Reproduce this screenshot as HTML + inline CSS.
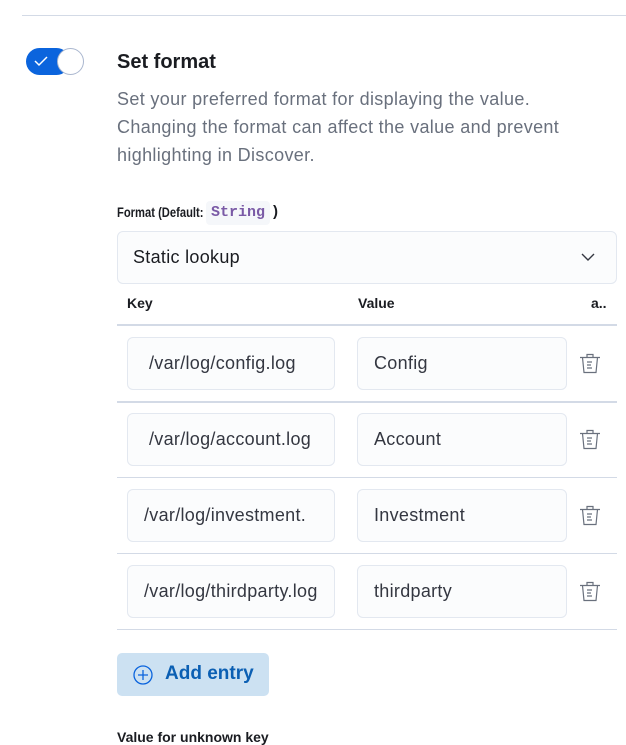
<!DOCTYPE html>
<html><head><style>
body{margin:0;width:626px;height:744px;overflow:hidden;background:#fff;font-family:"Liberation Sans",sans-serif;position:relative;color:#1a1c21}
.a{position:absolute}
.inp{position:absolute;background:#fbfcfd;border:1px solid #e3e8f0;border-radius:6px;box-sizing:border-box;height:53px;font-size:18px;line-height:51px;color:#343741;overflow:hidden;white-space:nowrap;letter-spacing:0.3px}
.inp span{display:inline-block;overflow:hidden;vertical-align:top}
.line{position:absolute;left:117px;width:500px;height:1px;background:#d3dae6}
</style></head><body>
<div class="a" style="left:22px;top:15px;width:604px;height:1px;background:#d3dae6"></div>
<div class="a" style="left:26px;top:48px;width:44px;height:27px;border-radius:14px;background:#0b64dd"></div>
<div class="a" style="left:57px;top:48px;width:27px;height:27px;border-radius:50%;background:#fff;border:1px solid #aab7cf;box-sizing:border-box"></div>
<svg class="a" style="left:33px;top:54px" width="16" height="14"><path d="M2 7l4 4 8-8" stroke="#fff" stroke-width="1.5" fill="none"/></svg>
<div class="a" style="left:117px;top:51px;font-size:20px;font-weight:bold">Set format</div>
<div class="a" style="left:117px;top:85px;width:520px;font-size:18px;line-height:28px;color:#69707d;white-space:nowrap;letter-spacing:0.35px">Set your preferred format for displaying the value.<br>Changing the format can affect the value and prevent<br>highlighting in Discover.</div>
<div class="a" style="left:117px;top:204px;font-size:14px;font-weight:bold;transform:scaleX(0.8);transform-origin:0 0;white-space:nowrap">Format (Default:</div>
<div class="a" style="left:206px;top:201px;width:64px;height:24px;background:#f5f7fa;border-radius:4px;font-family:'Liberation Mono',monospace;font-size:15px;font-weight:bold;color:#7a5aa6;line-height:24px;text-align:center">String</div>
<div class="a" style="left:273px;top:203px;font-size:15px;font-weight:bold">)</div>
<div class="inp" style="left:117px;top:231px;width:500px;height:53px;padding-left:15px;color:#1a1c21">Static lookup</div>
<svg class="a" style="left:580px;top:250px" width="16" height="14"><path d="M2 4l6 6 6-6" stroke="#343741" stroke-width="1.4" fill="none"/></svg>
<div class="a" style="left:127px;top:295px;font-size:14px;font-weight:bold">Key</div>
<div class="a" style="left:358px;top:295px;font-size:14px;font-weight:bold">Value</div>
<div class="a" style="left:591px;top:295px;font-size:14px;font-weight:bold">a..</div>
<div class="line" style="top:324px;height:2px"></div>

<div class="inp" style="left:127px;top:337px;width:208px;padding-left:21px"><span style="width:165px">/var/log/config.log</span></div>
<div class="inp" style="left:357px;top:337px;width:210px;padding-left:16px">Config</div>
<div class="line" style="top:401px;height:2px"></div>
<div class="inp" style="left:127px;top:413px;width:208px;padding-left:21px"><span style="width:171px">/var/log/account.log</span></div>
<div class="inp" style="left:357px;top:413px;width:210px;padding-left:16px">Account</div>
<div class="line" style="top:477px"></div>
<div class="inp" style="left:127px;top:489px;width:208px;padding-left:16px"><span style="width:176px">/var/log/investment.</span></div>
<div class="inp" style="left:357px;top:489px;width:210px;padding-left:16px">Investment</div>
<div class="line" style="top:553px"></div>
<div class="inp" style="left:127px;top:565px;width:208px;padding-left:16px"><span style="width:176px">/var/log/thirdparty.log</span></div>
<div class="inp" style="left:357px;top:565px;width:210px;padding-left:16px">thirdparty</div>
<div class="line" style="top:629px"></div>

<svg width="0" height="0" style="position:absolute"><defs><g id="t"><path d="M1 4.5h20M8 4.5V1.5h6v3M3.5 4.5l1.5 15h12l1.5-15M8 9h5M8 12h4M8 15h5" stroke="#69707d" stroke-width="1.2" fill="none"/></g></defs></svg>
<svg class="a" style="left:579px;top:353px" width="22" height="22"><use href="#t"/></svg>
<svg class="a" style="left:579px;top:429px" width="22" height="22"><use href="#t"/></svg>
<svg class="a" style="left:579px;top:505px" width="22" height="22"><use href="#t"/></svg>
<svg class="a" style="left:579px;top:581px" width="22" height="22"><use href="#t"/></svg>

<div class="a" style="left:117px;top:653px;width:152px;height:43px;background:#cce1f2;border-radius:5px"></div>
<svg class="a" style="left:132px;top:664px" width="22" height="22"><circle cx="11" cy="11" r="9" stroke="#0b64dd" stroke-width="1.3" fill="none"/><path d="M11 6v10M6 11h10" stroke="#0b64dd" stroke-width="1.3"/></svg>
<div class="a" style="left:165px;top:663px;font-size:19px;color:#0b5fb3;font-weight:bold">Add entry</div>
<div class="a" style="left:117px;top:729px;font-size:14px;font-weight:bold">Value for unknown key</div>
</body></html>
